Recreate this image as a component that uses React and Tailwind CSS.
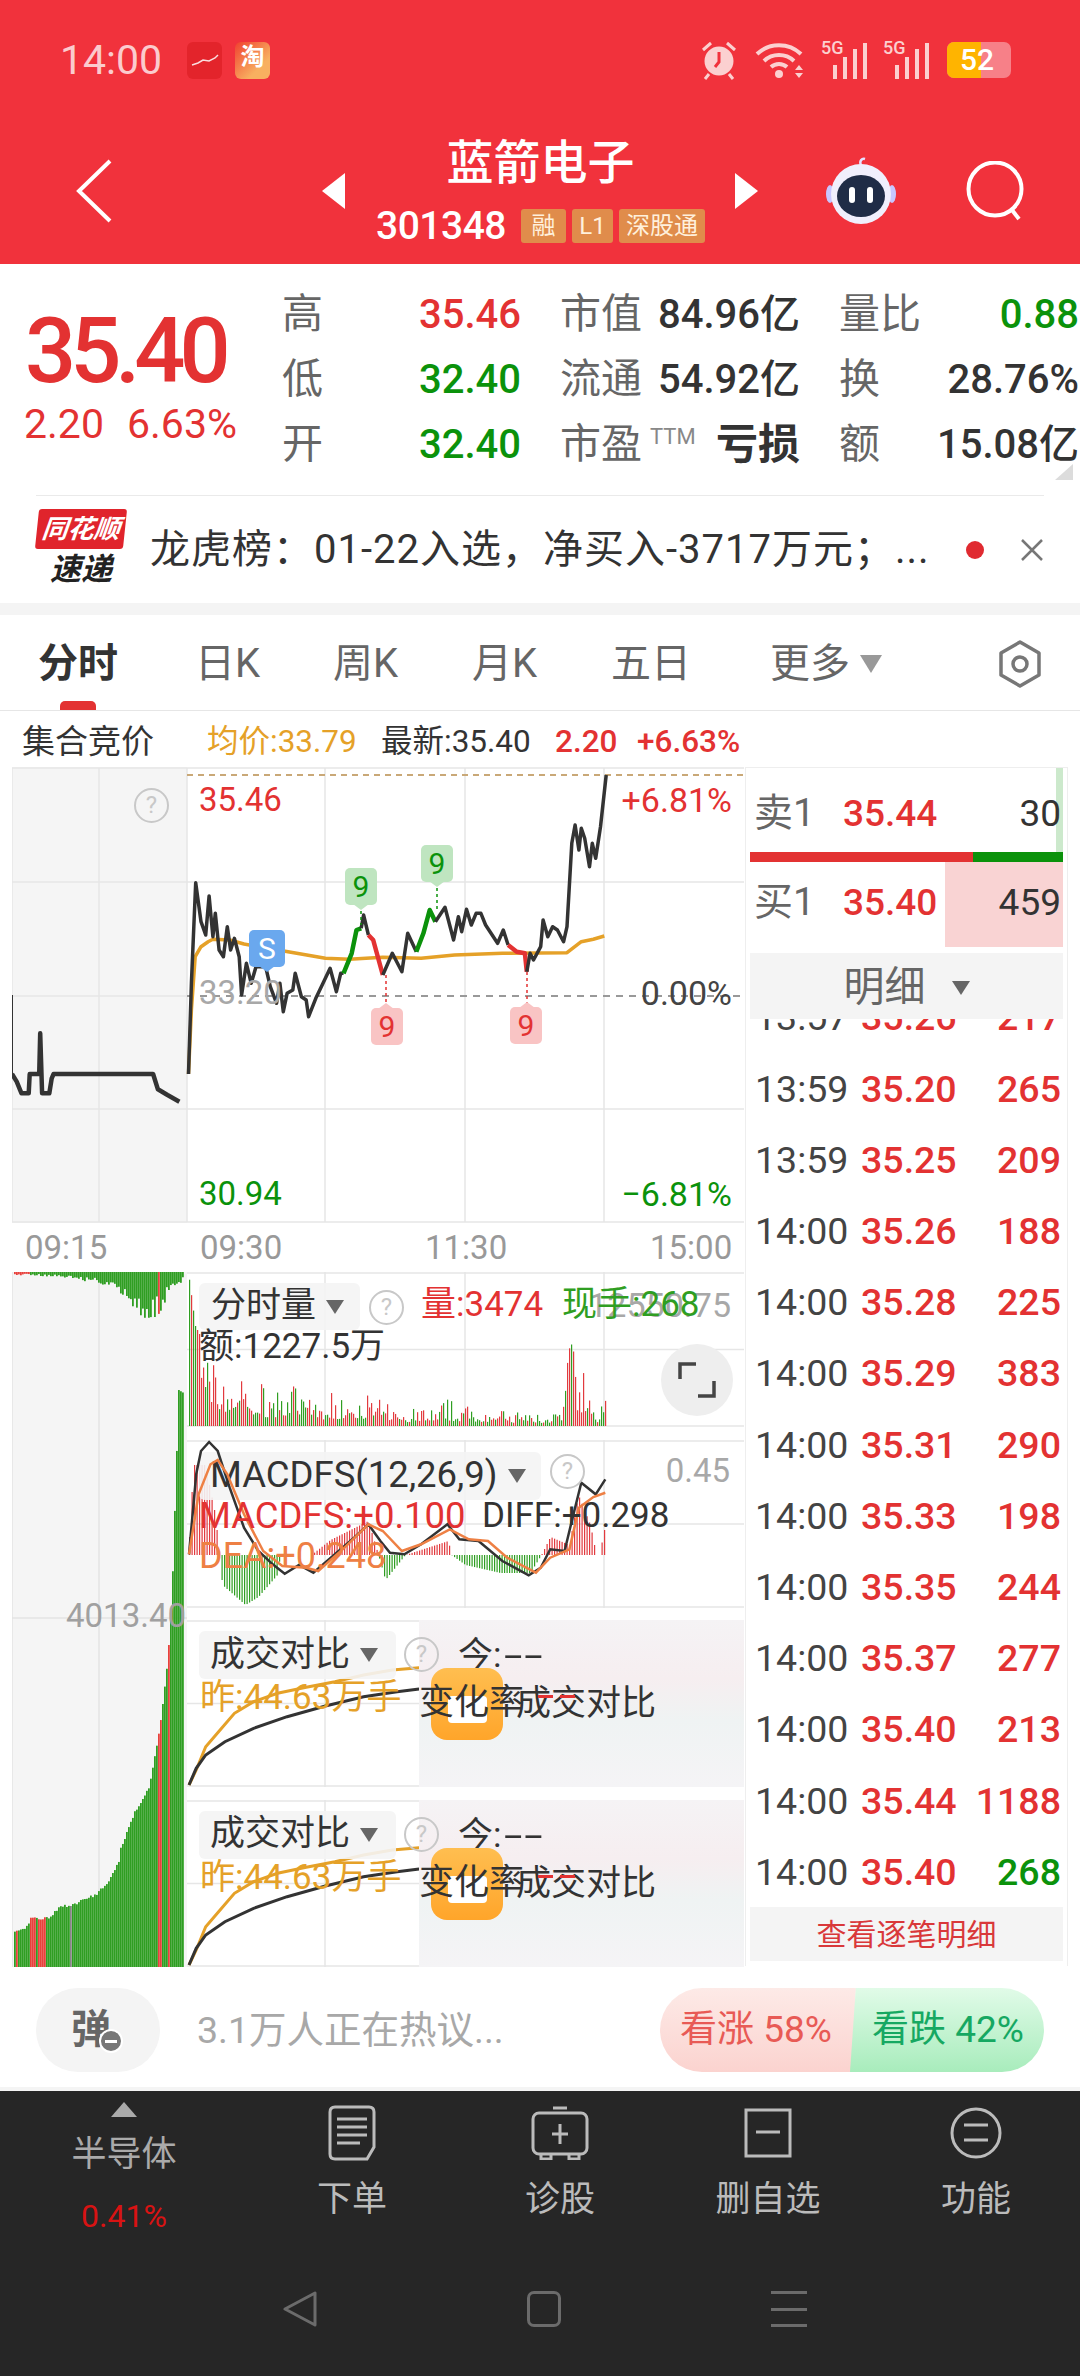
import React from 'react'

const FONT = "font-['Roboto','Noto_Sans_CJK_SC',sans-serif]"

// traced from the crops: x / 2.09, y / 3 + top of crop
const toPage = (pts, top) =>
    pts.map(([x, y]) => `${(x / 2.09).toFixed(1)},${(top + y / 3).toFixed(1)}`).join(' ')

const lerp = (table, x) => {
    for (let i = 1; i < table.length; i++) {
        if (x <= table[i][0]) {
            const [x0, y0] = table[i - 1]
            const [x1, y1] = table[i]
            return y0 + ((y1 - y0) * (x - x0)) / (x1 - x0 || 1)
        }
    }
    return table[table.length - 1][1]
}

let seed = 7
const rnd = () => {
    seed = (seed * 16807) % 2147483647
    return seed / 2147483647
}

const RED = '#e33232'
const GREEN = '#0b920b'

const PRE_LINE = [[25, 972], [35, 995], [45, 1030], [60, 1030], [62, 972], [82, 972], [84, 850], [88, 1030], [103, 1030], [108, 985], [112, 972], [320, 972], [330, 1018], [350, 1035], [375, 1055]]
const AVG_LINE = [[394, 972], [400, 780], [408, 620], [420, 590], [435, 575], [445, 568], [480, 570], [510, 582], [560, 595], [620, 610], [680, 625], [730, 628], [800, 622], [880, 625], [950, 615], [1050, 610], [1185, 608], [1215, 575], [1240, 568], [1263, 558]]
const PRICE_SEGMENTS = [
    ['#333', [[394, 972], [400, 700], [409, 398], [420, 515], [430, 555], [437, 438], [445, 560], [450, 490], [458, 600], [467, 620], [475, 530], [482, 600], [490, 565], [500, 620], [505, 735], [515, 640], [525, 700], [535, 650], [555, 650], [565, 710], [578, 760], [585, 700], [592, 785], [600, 730], [612, 720], [617, 670], [630, 740], [640, 750], [645, 800], [660, 745], [675, 700], [690, 655], [703, 725], [712, 670], [718, 670]]],
    [GREEN, [[718, 670], [735, 610], [745, 540], [755, 535]]],
    ['#333', [[755, 535], [760, 495], [770, 555]]],
    [RED, [[770, 555], [780, 570], [800, 675]]],
    ['#333', [[800, 675], [820, 610], [840, 665], [852, 550], [870, 605]]],
    [GREEN, [[870, 605], [885, 550], [898, 480], [910, 515]]],
    ['#333', [[910, 515], [930, 472], [948, 570], [958, 500], [965, 545], [975, 478], [985, 525], [995, 490], [1005, 490], [1015, 525], [1040, 580], [1052, 540], [1062, 585]]],
    [RED, [[1062, 585], [1080, 605], [1097, 610], [1101, 665]]],
    ['#333', [[1101, 665], [1108, 610], [1115, 630], [1130, 590], [1135, 510], [1145, 560], [1155, 530], [1165, 540], [1178, 575], [1185, 530], [1195, 280], [1202, 225], [1210, 300], [1215, 235], [1222, 265], [1232, 350], [1238, 280], [1245, 325], [1255, 230], [1267, 75]]],
]

const VOL_TABLE = [[188, 154], [195, 100], [205, 80], [215, 55], [240, 50], [260, 35], [290, 35], [320, 25], [360, 30], [400, 15], [450, 20], [520, 12], [560, 12], [570, 85], [580, 50], [590, 25], [598, 12], [603, 50], [606, 40]]
const VOL_BARS = []
for (let x = 189; x < 606; x += 2) {
    const peak = x < 200 || (x > 566 && x < 575)
    VOL_BARS.push({ x, h: lerp(VOL_TABLE, x) * (peak ? 1 : 0.25 + rnd() * rnd() * 1.2), red: rnd() > 0.5 })
}

const MACD_TABLE = [[188, 0], [193, 90], [205, 90], [215, 40], [219, 0], [222, -30], [245, -50], [258, -42], [277, -20], [280, 0], [311, 0], [330, 15], [368, 34], [378, 0], [385, -25], [405, 0], [448, 14], [451, 0], [465, -10], [500, -18], [530, -18], [541, 0], [550, 18], [569, 10], [578, 60], [590, 30], [596, 0], [600, 0], [603, 25], [606, 25]]
const MACD_DIFF = [[395, 880], [410, 640], [420, 570], [437, 543], [455, 570], [480, 680], [510, 800], [540, 870], [570, 910], [595, 938], [625, 912], [655, 935], [700, 880], [740, 830], [770, 790], [795, 840], [815, 875], [845, 880], [880, 850], [935, 790], [960, 835], [1000, 840], [1050, 900], [1105, 943], [1130, 920], [1150, 865], [1180, 870], [1195, 780], [1215, 665], [1245, 700], [1265, 655]]
const MACD_DEA = [[395, 880], [415, 700], [440, 610], [455, 597], [475, 640], [510, 760], [550, 870], [590, 915], [640, 920], [665, 930], [720, 860], [770, 790], [800, 810], [840, 870], [880, 850], [940, 805], [980, 835], [1020, 840], [1060, 890], [1120, 935], [1150, 890], [1190, 865], [1210, 740], [1240, 708], [1265, 695]]

const CMP_TODAY = [[395, 555], [410, 510], [430, 440], [460, 390], [490, 340], [530, 305], [580, 280], [640, 262], [700, 245], [760, 225], [820, 210], [876, 203]]
const CMP_BLACK = [[395, 555], [410, 505], [430, 465], [470, 425], [530, 385], [600, 350], [680, 318], [760, 290], [830, 275], [876, 267]]

const AUCTION_TOP = [[12, 3], [60, 5], [100, 12], [120, 25], [140, 45], [152, 55], [165, 30], [180, 12], [184, 8]]
const AUCTION_BOTTOM = [[14, 1930], [19, 1927], [25, 1927], [30, 1917], [48, 1917], [60, 1905], [72, 1903], [96, 1893], [110, 1877], [118, 1860], [120, 1847], [134, 1810], [148, 1787], [155, 1750], [160, 1720], [163, 1693], [167, 1657], [171, 1600], [175, 1480], [178, 1390], [182, 1390]]

function GridLines({ left, top, h }) {
    return (
        <g stroke="#e6e6e6" strokeWidth="1.5">
            <line x1={left} x2="744" y1={top + 1} y2={top + 1} />
            <line x1={left} x2="744" y1={top + h / 2} y2={top + h / 2} />
            <line x1={left} x2="744" y1={top + h - 1} y2={top + h - 1} />
            <line x1="325" x2="325" y1={top} y2={top + h} />
            <line x1="465" x2="465" y1={top} y2={top + h} />
            <line x1="604" x2="604" y1={top} y2={top + h} />
        </g>
    )
}

function Hint({ className }) {
    return (
        <div className={`absolute w-[35px] h-[35px] rounded-full border-[2px] border-[#c8c8c8] text-[#c8c8c8] text-[24px] leading-[31px] text-center ${className}`}>?</div>
    )
}

function Caret({ className = '' }) {
    return <div className={`w-0 h-0 border-x-[9px] border-x-transparent border-t-[14px] border-t-[#666] ${className}`} />
}

function Tag({ className, bg, color, children }) {
    return (
        <div className={`absolute w-[32px] h-[37px] rounded-[5px] text-[30px] leading-[37px] text-center ${bg} ${color} ${className}`}>{children}</div>
    )
}

function PriceChart() {
    return (
        <div className="relative h-[456px]">
            <svg className="absolute inset-0" width="732" height="456" viewBox="12 767 732 456">
                <rect x="12" y="767" width="175" height="456" fill="#f5f5f5" />
                <g stroke="#e6e6e6" strokeWidth="1.5">
                    <line x1="12" x2="744" y1="882" y2="882" />
                    <line x1="12" x2="187" y1="996" y2="996" />
                    <line x1="12" x2="744" y1="1109" y2="1109" />
                    <line x1="12" x2="744" y1="1222" y2="1222" />
                    <line x1="12" x2="744" y1="768" y2="768" />
                    <line x1="12" x2="12" y1="768" y2="1222" />
                    <line x1="99" x2="99" y1="768" y2="1222" />
                    <line x1="187" x2="187" y1="768" y2="1222" />
                    <line x1="325" x2="325" y1="768" y2="1222" />
                    <line x1="465" x2="465" y1="768" y2="1222" />
                    <line x1="604" x2="604" y1="768" y2="1222" />
                </g>
                <line x1="187" x2="744" y1="775" y2="775" stroke="#c9a877" strokeWidth="2" strokeDasharray="6 5" />
                <line x1="187" x2="744" y1="996" y2="996" stroke="#999" strokeWidth="2" strokeDasharray="7 6" />
                <line x1="12" x2="12" y1="995" y2="1074" stroke="#333" strokeWidth="2" />
                <polyline points={toPage(PRE_LINE, 750)} fill="none" stroke="#333" strokeWidth="4.5" strokeLinejoin="round" />
                <polyline points={toPage(AVG_LINE, 750)} fill="none" stroke="#e5a128" strokeWidth="3.5" strokeLinejoin="round" />
                {PRICE_SEGMENTS.map(([c, pts], i) => (
                    <polyline key={i} points={toPage(pts, 750)} fill="none" stroke={c} strokeWidth={c === '#333' ? 3.5 : 4.5} strokeLinejoin="round" />
                ))}
                <g strokeWidth="1.5" strokeDasharray="3 3">
                    <line x1="361" x2="361" y1="905" y2="925" stroke={GREEN} />
                    <line x1="437" x2="437" y1="882" y2="910" stroke={GREEN} />
                    <line x1="386" x2="386" y1="975" y2="1008" stroke={RED} />
                    <line x1="527" x2="527" y1="972" y2="1007" stroke={RED} />
                </g>
                <polygon points="361,910 353,904 369,904" fill="#bfe5c0" />
                <polygon points="437,887 429,881 445,881" fill="#bfe5c0" />
                <polygon points="386,1003 378,1009 394,1009" fill="#f9c4c4" />
                <polygon points="527,1002 519,1008 535,1008" fill="#f9c4c4" />
                <polygon points="267,972 259,966 275,966" fill="#6aa8ee" />
            </svg>
            <Hint className="left-[122px] top-[21px]" />
            <Tag className="left-[237px] top-[163px] w-[36px]" bg="bg-[#6aa8ee]" color="text-white">S</Tag>
            <Tag className="left-[333px] top-[101px]" bg="bg-[#bfe5c0]" color="text-[#0b920b]">9</Tag>
            <Tag className="left-[409px] top-[78px]" bg="bg-[#bfe5c0]" color="text-[#0b920b]">9</Tag>
            <Tag className="left-[359px] top-[241px]" bg="bg-[#f9c4c4]" color="text-[#e33232]">9</Tag>
            <Tag className="left-[498px] top-[240px]" bg="bg-[#f9c4c4]" color="text-[#e33232]">9</Tag>
            <span className="absolute left-[187px] top-[15px] text-[33px] leading-[36px] text-[#e33232]">35.46</span>
            <span className="absolute right-[12px] top-[15px] text-[34px] leading-[36px] text-[#e33232]">+6.81%</span>
            <span className="absolute left-[187px] top-[208px] text-[33px] leading-[36px] text-[#a8a8a8]">33.20</span>
            <span className="absolute right-[12px] top-[208px] text-[34px] leading-[36px] text-[#444]">0.00%</span>
            <span className="absolute left-[187px] top-[409px] text-[33px] leading-[36px] text-[#0b920b]">30.94</span>
            <span className="absolute right-[12px] top-[409px] text-[34px] leading-[36px] text-[#0b920b]">−6.81%</span>
        </div>
    )
}

function AuctionColumn() {
    const bars = []
    for (let x = 14; x < 183; x += 2) {
        const isRed = (x > 14 && x < 17) || (x > 28 && x < 35) || (x > 37 && x < 45) || (x > 157 && x < 162) || (x > 166 && x < 169)
        const c = isRed ? '#e8413c' : x > 69 && x < 71 ? '#888' : '#2f9e22'
        const top = lerp(AUCTION_BOTTOM, x) + rnd() * 3
        bars.push(<rect key={x} x={x} y={top} width="1.8" height={1968 - top} fill={c} />)
        const depth = lerp(AUCTION_TOP, x) * (0.5 + rnd() * 0.5)
        bars.push(<rect key={`t${x}`} x={x} y="1272" width="1.8" height={depth} fill={x < 30 || (x > 157 && x < 160) ? '#e8413c' : '#2f9e22'} />)
    }
    return (
        <div className="relative w-[175px] h-[695px] bg-[#f5f5f5]">
            <svg className="absolute inset-0" width="175" height="695" viewBox="12 1272 175 695">
                <line x1="99" x2="99" y1="1272" y2="1967" stroke="#e3e3e3" strokeWidth="1.5" />
                <line x1="12" x2="187" y1="1618" y2="1618" stroke="#e3e3e3" strokeWidth="1.5" />
                <line x1="12" x2="12" y1="1272" y2="1967" stroke="#e3e3e3" strokeWidth="1.5" />
                {bars}
            </svg>
            <span className="absolute right-[1px] top-[326px] text-[33px] leading-[36px] text-[#a0a0a0]">4013.40</span>
        </div>
    )
}

function VolumePanel() {
    return (
        <div className="relative h-[155px]">
            <svg className="absolute inset-0" width="557" height="155" viewBox="187 1272 557 155">
                <GridLines left={187} top={1272} h={155} />
                {VOL_BARS.map((b, i) => (
                    <rect key={i} x={b.x} y={1426 - b.h} width="1.2" height={b.h} fill={b.red ? '#e23a3e' : '#2f9e22'} />
                ))}
            </svg>
            <div className="absolute left-[12px] top-[11px] flex items-center w-[161px] h-[47px] pl-[12px] rounded-[6px] bg-[#f4f4f4]/90 text-[35px] text-[#333] whitespace-nowrap">
                分时量<Caret className="ml-[10px]" />
            </div>
            <Hint className="left-[182px] top-[18px]" />
            <span className="absolute right-[13px] top-[13px] text-[34px] leading-[40px] text-[#a8a8a8]">12550.75</span>
            <span className="absolute left-[234px] top-[13px] text-[35px] leading-[40px] text-[#e33232] whitespace-nowrap">量:3474</span>
            <span className="absolute left-[375px] top-[13px] text-[35px] leading-[40px] text-[#2f9e22] whitespace-nowrap">现手:268</span>
            <span className="absolute left-[12px] top-[55px] text-[35px] leading-[40px] text-[#333] whitespace-nowrap">额:1227.5万</span>
            <div className="absolute left-[474px] top-[72px] w-[72px] h-[72px] rounded-full bg-[#eeeeee] flex items-center justify-center">
                <svg width="38" height="38" viewBox="0 0 38 38" fill="none" stroke="#444" strokeWidth="3.5">
                    <path d="M2 18V3H18M36 20V35H20" />
                </svg>
            </div>
        </div>
    )
}

function MacdPanel() {
    const bars = []
    for (let x = 189; x < 606; x += 2.5) {
        const v = lerp(MACD_TABLE, x)
        const k = Math.round(x * 10)
        bars.push(<rect key={k} x={x} y={v > 0 ? 1554 - v : 1554} width="1.2" height={Math.abs(v)} fill={v > 0 ? '#e23a3e' : '#2f9e22'} />)
    }
    return (
        <div className="relative h-[168px]">
            <svg className="absolute inset-0" width="557" height="168" viewBox="187 1439 557 168">
                <GridLines left={187} top={1439} h={168} />
                {bars}
            </svg>
            <div className="absolute left-[12px] top-[12px] flex items-center w-[342px] h-[48px] pl-[11px] rounded-[6px] bg-[#f4f4f4]/90 text-[36.5px] text-[#333] whitespace-nowrap">
                MACDFS(12,26,9)<Caret className="ml-[10px]" />
            </div>
            <svg className="absolute inset-0" width="557" height="168" viewBox="187 1439 557 168">
                <polyline points={toPage(MACD_DIFF, 1260)} fill="none" stroke="#333" strokeWidth="2.5" />
                <polyline points={toPage(MACD_DEA, 1260)} fill="none" stroke="#ee8044" strokeWidth="2.5" />
            </svg>
            <Hint className="left-[363px] top-[14px]" />
            <span className="absolute right-[14px] top-[11px] text-[33px] leading-[40px] text-[#a8a8a8]">0.45</span>
            <span className="absolute left-[12px] top-[56px] text-[36.5px] leading-[40px] text-[#e33232] whitespace-nowrap">MACDFS:+0.100</span>
            <span className="absolute left-[295px] top-[56px] text-[35px] leading-[40px] text-[#333] whitespace-nowrap">DIFF:+0.298</span>
            <span className="absolute left-[12px] top-[96px] text-[36px] leading-[40px] text-[#ee8044] whitespace-nowrap">DEA:+0.248</span>
        </div>
    )
}

function ComparePanel() {
    return (
        <div className="relative h-[167px] overflow-hidden">
            <svg className="absolute inset-0" width="557" height="167" viewBox="187 1620 557 167">
                <GridLines left={187} top={1620} h={167} />
                <polyline points={toPage(CMP_TODAY, 1600)} fill="none" stroke="#e5a128" strokeWidth="3" />
                <polyline points={toPage(CMP_BLACK, 1600)} fill="none" stroke="#333" strokeWidth="3" />
            </svg>
            <div className="absolute left-[232px] top-0 bottom-0 w-[325px] bg-[linear-gradient(180deg,#f5f3f5_0%,#f6eef0_35%,#eff3f3_60%,#f5f4f6_100%)]" />
            <div className="absolute left-[12px] top-[11px] flex items-center w-[197px] h-[48px] pl-[11px] rounded-[6px] bg-[#f4f4f4]/90 text-[35px] text-[#333] whitespace-nowrap">
                成交对比<Caret className="ml-[10px]" />
            </div>
            <Hint className="left-[217px] top-[17px]" />
            <span className="absolute left-[271px] top-[16px] text-[35px] leading-[40px] text-[#333] whitespace-nowrap">今:<span className="inline-block ml-[3px] origin-left scale-x-[1.9] tracking-[1px]">--</span></span>
            <div className="absolute left-[244px] top-[48px] w-[72px] h-[72px] rounded-[16px] bg-[linear-gradient(180deg,#ffbe50,#ffa52a)]">
                <div className="ml-[17px] mt-[28px] w-[39px] h-[27px] rounded-[4px] bg-white" />
            </div>
            <span className="absolute left-[13px] top-[58px] text-[35px] leading-[40px] text-[#e5a128] whitespace-nowrap">昨:44.63万手</span>
            <span className="absolute left-[232px] top-[63px] text-[35px] leading-[40px] text-[#333] whitespace-nowrap">变化率</span>
            <span className="absolute left-[329px] top-[64px] text-[35px] leading-[40px] text-[#333] whitespace-nowrap">成交对比</span>
            <div className="absolute left-[351px] top-[75px] w-[15px] h-[3px] bg-[#e33232]" />
            <div className="absolute left-[373px] top-[75px] w-[15px] h-[3px] bg-[#e33232]" />
        </div>
    )
}

function TradeRow({ t, p, v, up = true }) {
    return (
        <div className="flex items-center h-[71.2px] pl-[5px] pr-[2px] text-[37.5px] whitespace-nowrap">
            <span className="w-[106px] text-[#444]">{t}</span>
            <span className="font-medium text-[#e33232]">{p}</span>
            <span className={`ml-auto font-medium ${up ? 'text-[#e33232]' : 'text-[#0b920b]'}`}>{v}</span>
        </div>
    )
}

const TRADES = [
    ['13:57', '35.26', '217'],
    ['13:59', '35.20', '265'],
    ['13:59', '35.25', '209'],
    ['14:00', '35.26', '188'],
    ['14:00', '35.28', '225'],
    ['14:00', '35.29', '383'],
    ['14:00', '35.31', '290'],
    ['14:00', '35.33', '198'],
    ['14:00', '35.35', '244'],
    ['14:00', '35.37', '277'],
    ['14:00', '35.40', '213'],
    ['14:00', '35.44', '1188'],
]

function OrderPanel() {
    return (
        <div className="w-[323px] h-[1199px] ml-[1px] px-[4px] border-x border-t border-[#eeeeee] flex flex-col">
            <div className="relative flex items-center h-[84px] pt-[7px] text-[37px]">
                <div className="absolute right-0 top-0 bottom-0 w-[7px] bg-[#cce9cc]" />
                <span className="ml-[4px] w-[89px] text-[#666] text-[39px]">卖1</span>
                <span className="font-medium text-[#e33232]">35.44</span>
                <span className="relative ml-auto mr-[2px] text-[#333]">30</span>
            </div>
            <div className="flex h-[10px]">
                <div className="w-[223px] bg-[#e33232]" />
                <div className="flex-1 bg-[#0b920b]" />
            </div>
            <div className="relative flex items-center h-[85px] pb-[4px] text-[37px]">
                <div className="absolute right-0 top-0 bottom-0 w-[118px] bg-[#f9d3d3]" />
                <span className="ml-[4px] w-[89px] text-[#666] text-[39px]">买1</span>
                <span className="font-medium text-[#e33232]">35.40</span>
                <span className="relative ml-auto mr-[2px] text-[#333]">459</span>
            </div>
            <div className="relative z-10 flex items-center justify-center mt-[6px] h-[66px] pt-[3px] shrink-0 bg-[#f4f4f4] text-[41px] text-[#666]">
                明细<Caret className="ml-[26px]" />
            </div>
            <div className="-mt-[37px]">
                {TRADES.map((r, i) => (
                    <TradeRow key={i} t={r[0]} p={r[1]} v={r[2]} />
                ))}
                <TradeRow t="14:00" p="35.40" v="268" up={false} />
            </div>
            <div className="h-[54px] bg-[#f4f4f4] text-[30px] text-[#d9383a] flex items-center justify-center">查看逐笔明细</div>
        </div>
    )
}

function Signal({ className }) {
    return (
        <div className={`relative w-[46px] h-[38px] ${className}`}>
            <span className="absolute left-0 -top-[2px] text-[18px] leading-[18px] font-medium text-[#fbd0d0]">5G</span>
            <div className="absolute inset-0 flex items-end justify-end gap-[6px]">
                <div className="w-[4px] h-[14px] bg-[#fbd0d0]" />
                <div className="w-[4px] h-[22px] bg-[#fbd0d0]" />
                <div className="w-[4px] h-[30px] bg-[#fbd0d0]" />
                <div className="w-[4px] h-[36px] bg-[#fbd0d0]" />
            </div>
        </div>
    )
}

function StatusBar() {
    return (
        <div className="flex items-center h-[120px] pl-[60px] text-white/75">
            <span className="text-[41px] font-normal w-[127px] leading-none">14:00</span>
            <div className="w-[35px] h-[37px] rounded-[6px] bg-[#e3242b] flex items-center justify-center">
                <svg width="30" height="14" viewBox="0 0 30 14" fill="none" stroke="#fff" strokeWidth="1.5" opacity="0.85">
                    <path d="M2 12l6-2 5-3 6 1 6-3 3-3" />
                </svg>
            </div>
            <div className="ml-[13px] w-[35px] h-[37px] rounded-[6px] bg-[linear-gradient(135deg,#f04030,#f8b060_70%)] text-[24px] leading-[30px] text-center text-white font-bold">淘</div>
            <svg className="ml-[430px]" width="38" height="40" viewBox="0 0 38 40" fill="none" stroke="#fbd0d0" strokeWidth="3">
                <circle cx="19" cy="21" r="13" fill="#fbd0d0" />
                <path d="M19 12v10l-4 5" stroke="#f1323c" />
                <path d="M3 10l8-7M35 10l-8-7M9 34l-4 5M29 34l4 5" />
            </svg>
            <svg className="ml-[17px]" width="50" height="40" viewBox="0 0 50 40" fill="none" stroke="#fbd0d0" strokeWidth="4">
                <path d="M2 14a32 32 0 0 1 44 0M9 21a22 22 0 0 1 30 0M16 27a12 12 0 0 1 16 0" />
                <circle cx="24" cy="34" r="4" fill="#fbd0d0" stroke="none" />
                <path d="M44 25l-4 5h8zM44 38l-4-5h8z" fill="#fbd0d0" stroke="none" />
            </svg>
            <Signal className="ml-[16px]" />
            <Signal className="ml-[16px]" />
            <div className="ml-[18px] flex w-[64px] h-[36px] rounded-[7px] overflow-hidden bg-[#f78088] relative text-white text-[30px] font-medium leading-[36px]">
                <div className="w-[34px] bg-[#ffb400]" />
                <span className="absolute left-[13px] top-0">52</span>
            </div>
        </div>
    )
}

function Badge({ children, w }) {
    return <span className={`${w} h-[34px] flex items-center justify-center bg-[#e08c4b] rounded-[3px] text-[24px] text-[#fff0dc] overflow-hidden whitespace-nowrap`}>{children}</span>
}

function NavBar() {
    return (
        <div className="flex items-center h-[144px] pb-[2px]">
            <svg className="ml-[75px]" width="38" height="64" viewBox="0 0 38 64" fill="none" stroke="#fff" strokeWidth="4">
                <path d="M35 2L4 32L35 62" />
            </svg>
            <div className="ml-[209px] w-0 h-0 border-y-[18px] border-y-transparent border-r-[23px] border-r-white" />
            <div className="ml-[31px] w-[329px] flex flex-col items-center">
                <div className="text-[47px] leading-[56px] font-medium text-white whitespace-nowrap">蓝箭电子</div>
                <div className="flex items-center h-[42px] mt-[14px] self-start">
                    <span className="text-[39px] font-medium text-white tracking-[-0.5px] mr-[15px]">301348</span>
                    <div className="flex gap-[6px]">
                        <Badge w="w-[45px]">融</Badge>
                        <Badge w="w-[41px]">L1</Badge>
                        <Badge w="w-[86px]">深股通</Badge>
                    </div>
                </div>
            </div>
            <div className="ml-[30px] w-0 h-0 border-y-[18px] border-y-transparent border-l-[23px] border-l-white" />
            <svg className="ml-[67px]" width="72" height="68" viewBox="0 0 72 68">
                <path d="M36 8c-2-4 1-7 4-6" fill="none" stroke="#e6e0ff" strokeWidth="2.5" />
                <ellipse cx="5" cy="37" rx="4" ry="9" fill="#c8c6ff" />
                <ellipse cx="67" cy="37" rx="4" ry="9" fill="#c8c6ff" />
                <ellipse cx="36" cy="37" rx="30" ry="30" fill="#f0effc" />
                <ellipse cx="36" cy="39" rx="24" ry="21" fill="#1f2c46" />
                <rect x="24" y="30" width="6" height="16" rx="3" fill="#fff" />
                <rect x="42" y="30" width="6" height="16" rx="3" fill="#fff" />
            </svg>
            <svg className="ml-[69px]" width="60" height="60" viewBox="0 0 60 60" fill="none" stroke="#fff" strokeWidth="4">
                <circle cx="29" cy="28" r="26.5" />
                <path d="M46 49l7 9" />
            </svg>
        </div>
    )
}

function StatRow({ children }) {
    return <div className="flex items-center justify-between whitespace-nowrap">{children}</div>
}

function Quote() {
    const label = 'text-[41px] text-[#666]'
    const num = 'text-[40px] font-medium'
    return (
        <div className="relative flex h-[231px] pt-[18px]">
            <div className="w-[282px] pl-[25px] pt-[22px]">
                <div className="text-[90px] leading-[96px] font-medium tracking-[-6px] text-[#e33232]">35.40</div>
                <div className="flex mt-[2px] -ml-[1px] text-[41px] leading-[44px] text-[#e33232]">
                    <span className="w-[103px]">2.20</span>
                    <span>6.63%</span>
                </div>
            </div>
            <div className="grid grid-cols-[239px_240px_240px] gap-x-[39px] grid-rows-[65px_65px_65px] items-center">
                <StatRow><span className={label}>高</span><span className={`${num} text-[#e33232]`}>35.46</span></StatRow>
                <StatRow><span className={label}>市值</span><span className={`${num} text-[#333]`}>84.96亿</span></StatRow>
                <StatRow><span className={label}>量比</span><span className={`${num} text-[#0b920b]`}>0.88</span></StatRow>
                <StatRow><span className={label}>低</span><span className={`${num} text-[#0b920b]`}>32.40</span></StatRow>
                <StatRow><span className={label}>流通</span><span className={`${num} text-[#333]`}>54.92亿</span></StatRow>
                <StatRow><span className={label}>换</span><span className={`${num} text-[#333]`}>28.76%</span></StatRow>
                <StatRow><span className={label}>开</span><span className={`${num} text-[#0b920b]`}>32.40</span></StatRow>
                <StatRow>
                    <span className={label}>市盈<sup className="ml-[8px] text-[22px] text-[#888] -top-[14px]">TTM</sup></span>
                    <span className="text-[42px] font-bold text-[#333]">亏损</span>
                </StatRow>
                <StatRow><span className={label}>额</span><span className={`${num} text-[#333]`}>15.08亿</span></StatRow>
            </div>
            <div className="absolute right-[7px] bottom-[15px] w-0 h-0 border-l-[18px] border-l-transparent border-b-[16px] border-b-[#dcdcdc]" />
        </div>
    )
}

function NewsBar() {
    return (
        <div className="relative flex items-center h-[108px] mx-[36px] border-t border-[#eaeaea]">
            <div className="w-[90px] flex flex-col items-center -mt-[3px]">
                <div className="w-[88px] h-[40px] bg-[#e0242c] rounded-[3px] -skew-x-6 text-white text-[26px] leading-[40px] font-bold italic text-center whitespace-nowrap">同花顺</div>
                <div className="text-[31px] leading-[34px] mt-[4px] font-bold italic text-[#222]">速递</div>
            </div>
            <div className="ml-[24px] text-[40px] tracking-[1px] text-[#333] whitespace-nowrap">龙虎榜：01-22入选，净买入-3717万元；...</div>
            <div className="absolute left-[930px] w-[18px] h-[18px] rounded-full bg-[#e02a30]" />
            <svg className="absolute left-[984px]" width="24" height="24" viewBox="0 0 24 24" fill="none" stroke="#777" strokeWidth="2.5">
                <path d="M2 2l20 20M22 2L2 22" />
            </svg>
        </div>
    )
}

function Tabs() {
    return (
        <div className="relative grid grid-cols-[157px_138px_139px_139px_159px_auto] items-center h-[96px] pt-[3px] pl-[38px] pr-[36px] border-b border-[#e6e6e6] text-[40px] text-[#666] whitespace-nowrap">
            <span className="font-bold text-[#333]">分时</span>
            <span>日K</span>
            <span>周K</span>
            <span>月K</span>
            <span>五日</span>
            <div className="flex items-center justify-between">
                <span className="flex items-center">更多<Caret className="ml-[10px] border-t-[#999] border-x-[11px] border-t-[18px]" /></span>
                <svg width="48" height="48" viewBox="0 0 48 48" fill="none" stroke="#777" strokeWidth="3.5">
                    <path d="M24 2L43 13V35L24 46L5 35V13Z" strokeLinejoin="round" />
                    <circle cx="24" cy="24" r="7" />
                </svg>
            </div>
            <div className="absolute left-[60px] bottom-0 w-[36px] h-[9px] rounded-t-[5px] bg-[#e33232]" />
        </div>
    )
}

function InfoRow() {
    return (
        <div className="flex items-center h-[56px] pt-[5px] pl-[22px] text-[31.5px] whitespace-nowrap">
            <span className="w-[185px] text-[33px] text-[#333]">集合竞价</span>
            <span className="w-[174px] text-[#e5a128]">均价:33.79</span>
            <span className="w-[174px] text-[#333]">最新:35.40</span>
            <span className="w-[82px] text-[#e33232] font-medium">2.20</span>
            <span className="text-[#e33232] font-medium">+6.63%</span>
        </div>
    )
}

function TimeAxis() {
    return (
        <div className="grid grid-cols-[175px_225px_225px_auto] items-center h-[49px] pl-[13px] text-[33px] text-[#999]">
            <span>09:15</span>
            <span>09:30</span>
            <span>11:30</span>
            <span>15:00</span>
        </div>
    )
}

function SocialBar() {
    return (
        <div className="flex items-center h-[120px] pt-[6px] pl-[36px] pr-[36px]">
            <div className="relative w-[124px] h-[84px] rounded-[42px] bg-[#f4f4f4] text-[40px] font-bold text-[#666] leading-[84px] pl-[35px]">
                弹
                <div className="absolute left-[63px] top-[41px] w-[24px] h-[24px] rounded-full bg-[#777] border-[2px] border-white flex items-center justify-center">
                    <div className="w-[12px] h-[3px] bg-white" />
                </div>
            </div>
            <span className="ml-[37px] text-[37.5px] text-[#a8a8a8] whitespace-nowrap">3.1万人正在热议...</span>
            <div className="ml-auto flex h-[84px] w-[384px] text-[37px] whitespace-nowrap">
                <div className="w-[196px] pl-[20px] flex items-center rounded-l-[42px] bg-[linear-gradient(180deg,#fdeae7,#fbd3cf)] text-[#e85a55] [clip-path:polygon(0_0,100%_0,98%_100%,0_100%)]">看涨 58%</div>
                <div className="w-[194px] -ml-[6px] pl-[22px] flex items-center rounded-r-[42px] bg-[linear-gradient(180deg,#e1fbe8,#a8ecbc)] text-[#16a862] [clip-path:polygon(3%_0,100%_0,100%_100%,0_100%)]">看跌 42%</div>
            </div>
        </div>
    )
}

function ToolItem({ label, children }) {
    return (
        <div className="flex flex-col items-center">
            <div className="h-[62px] flex items-center">{children}</div>
            <span className="mt-[15px] text-[35px] leading-[42px] text-[#bbbbbb] whitespace-nowrap">{label}</span>
        </div>
    )
}

function BottomBar() {
    return (
        <div className="flex-1 bg-[#262626]">
            <div className="grid grid-cols-[248px_repeat(4,208px)] h-[187px] pt-[11px]">
                <div className="flex flex-col items-center">
                    <div className="w-0 h-0 border-x-[13px] border-x-transparent border-b-[15px] border-b-[#aaaaaa]" />
                    <span className="mt-[17px] text-[35px] leading-[42px] text-[#aaaaaa]">半导体</span>
                    <span className="mt-[21px] text-[32px] leading-[38px] text-[#d81313]">0.41%</span>
                </div>
                <ToolItem label="下单">
                    <svg width="48" height="56" viewBox="0 0 48 56" fill="none" stroke="#bbb" strokeWidth="3">
                        <path d="M7 2H41Q46 2 46 7V42L39 54H7Q2 54 2 49V7Q2 2 7 2Z" />
                        <path d="M9 14H39M9 22H39M9 30H39M9 38H32" />
                    </svg>
                </ToolItem>
                <ToolItem label="诊股">
                    <svg width="58" height="54" viewBox="0 0 58 54" fill="none" stroke="#bbb" strokeWidth="3">
                        <path d="M22 2H36" />
                        <rect x="2" y="7" width="54" height="41" rx="6" />
                        <path d="M29 18V38M21 28H37M10 48V53H20V48M38 48V53H48V48" />
                    </svg>
                </ToolItem>
                <ToolItem label="删自选">
                    <svg width="48" height="50" viewBox="0 0 48 50" fill="none" stroke="#bbb" strokeWidth="3">
                        <rect x="2" y="2" width="44" height="46" />
                        <path d="M12 24H36" />
                    </svg>
                </ToolItem>
                <ToolItem label="功能">
                    <svg width="52" height="52" viewBox="0 0 52 52" fill="none" stroke="#bbb" strokeWidth="3">
                        <circle cx="26" cy="26" r="24" />
                        <path d="M14 18H38M14 33H38" />
                    </svg>
                </ToolItem>
            </div>
            <div className="flex items-center gap-[210px] pl-[283px] pt-[13px]">
                <svg width="34" height="36" viewBox="0 0 34 36" fill="none" stroke="#6b6b6b" strokeWidth="3">
                    <path d="M32 2V34L2 18Z" strokeLinejoin="round" />
                </svg>
                <div className="w-[34px] h-[36px] rounded-[7px] border-[3px] border-[#6b6b6b]" />
                <div className="w-[36px] h-[36px] flex flex-col justify-between">
                    <div className="h-[3px] bg-[#6b6b6b]" />
                    <div className="h-[3px] bg-[#6b6b6b]" />
                    <div className="h-[3px] bg-[#6b6b6b]" />
                </div>
            </div>
        </div>
    )
}

export default function App() {
    return (
        <div className={`${FONT} w-[1080px] h-[2376px] bg-white flex flex-col overflow-hidden`}>
            <div className="h-[264px] shrink-0 bg-[#f1323c]">
                <StatusBar />
                <NavBar />
            </div>
            <Quote />
            <NewsBar />
            <div className="h-[12px] shrink-0 bg-[#f4f4f4]" />
            <Tabs />
            <InfoRow />
            <div className="flex h-[1200px] shrink-0 pl-[12px]">
                <div className="w-[732px]">
                    <PriceChart />
                    <TimeAxis />
                    <div className="flex">
                        <AuctionColumn />
                        <div className="w-[557px] flex flex-col gap-[12.5px]">
                            <VolumePanel />
                            <MacdPanel />
                            <ComparePanel />
                            <ComparePanel />
                        </div>
                    </div>
                </div>
                <OrderPanel />
            </div>
            <SocialBar />
            <div className="h-[4px] shrink-0 bg-[#f4f4f4]" />
            <BottomBar />
        </div>
    )
}
